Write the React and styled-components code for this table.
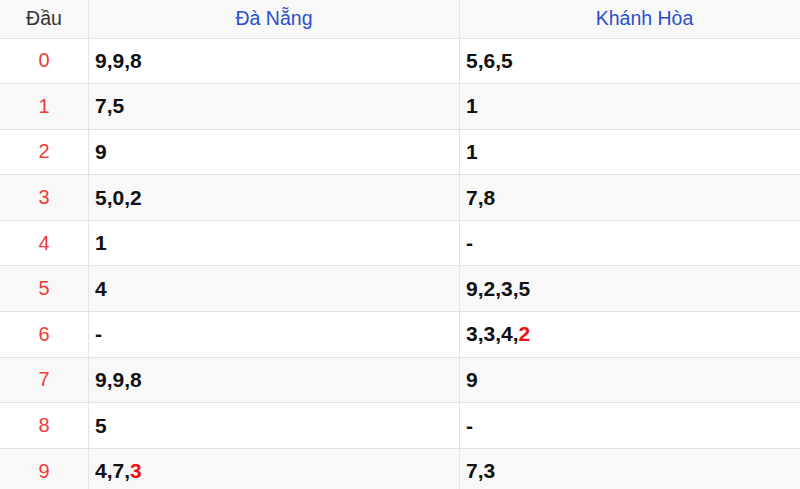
import React from "react";
import styled, { createGlobalStyle } from "styled-components";

const GlobalStyle = createGlobalStyle`
  html, body {
    margin: 0;
    padding: 0;
    background: #ffffff;
    overflow: hidden;
    font-family: "Liberation Sans", Arial, sans-serif;
  }
`;

const rows = [
  { head: "0", dn: ["9", "9", "8"], kh: ["5", "6", "5"] },
  { head: "1", dn: ["7", "5"], kh: ["1"] },
  { head: "2", dn: ["9"], kh: ["1"] },
  { head: "3", dn: ["5", "0", "2"], kh: ["7", "8"] },
  { head: "4", dn: ["1"], kh: [] },
  { head: "5", dn: ["4"], kh: ["9", "2", "3", "5"] },
  { head: "6", dn: [], kh: ["3", "3", "4", "2*"] },
  { head: "7", dn: ["9", "9", "8"], kh: ["9"] },
  { head: "8", dn: ["5"], kh: [] },
  { head: "9", dn: ["4", "7", "3*"], kh: ["7", "3"] },
];

// "*" marks the special (red) number
const Numbers = ({ list }) => {
  if (!list.length) return <span>-</span>;
  return list.map((n, i) => (
    <React.Fragment key={i}>
      {i > 0 && ","}
      {n.endsWith("*") ? <Hot>{n.slice(0, -1)}</Hot> : n}
    </React.Fragment>
  ));
};

const App = () => {
  return (
    <>
      <GlobalStyle />
      <Table>
        <HeaderRow>
          <HeadCell>Đầu</HeadCell>
          <HeadCell $blue>Đà Nẵng</HeadCell>
          <HeadCell $blue $last>Khánh Hòa</HeadCell>
        </HeaderRow>
        {rows.map((r, i) => (
          <Row key={r.head} $alt={i % 2 === 1}>
            <HeadNum>{r.head}</HeadNum>
            <Cell>
              <Numbers list={r.dn} />
            </Cell>
            <Cell $last>
              <Numbers list={r.kh} />
            </Cell>
          </Row>
        ))}
      </Table>
    </>
  );
};

export default App;

const Table = styled.div`
  width: 829px;
  display: flex;
  flex-direction: column;
`;

const HeaderRow = styled.div`
  display: grid;
  grid-template-columns: 89px 371px 1fr;
  height: 38.5px;
  background: #f8f8f8;
  border-bottom: 1.5px solid #e3e3e3;
  box-sizing: border-box;
`;

const Row = styled.div`
  display: grid;
  grid-template-columns: 89px 371px 1fr;
  height: 45.6px;
  background: ${(p) => (p.$alt ? "#f8f8f8" : "#ffffff")};
  border-bottom: 1.5px solid #e3e3e3;
  box-sizing: border-box;
`;

const HeadCell = styled.div`
  display: flex;
  align-items: center;
  justify-content: center;
  font-size: 19.5px;
  color: ${(p) => (p.$blue ? "#2b4fcb" : "#333333")};
  border-right: ${(p) => (p.$last ? "none" : "1.5px solid #e3e3e3")};
  padding-bottom: 1px;
`;

const HeadNum = styled.div`
  display: flex;
  align-items: center;
  justify-content: center;
  font-size: 20px;
  color: #f23b3b;
  border-right: 1.5px solid #e3e3e3;
`;

const Cell = styled.div`
  display: flex;
  align-items: center;
  padding-left: 6px;
  font-size: 21px;
  font-weight: bold;
  color: #111111;
  border-right: ${(p) => (p.$last ? "none" : "1.5px solid #e3e3e3")};
`;

const Hot = styled.span`
  color: #ee1111;
`;
